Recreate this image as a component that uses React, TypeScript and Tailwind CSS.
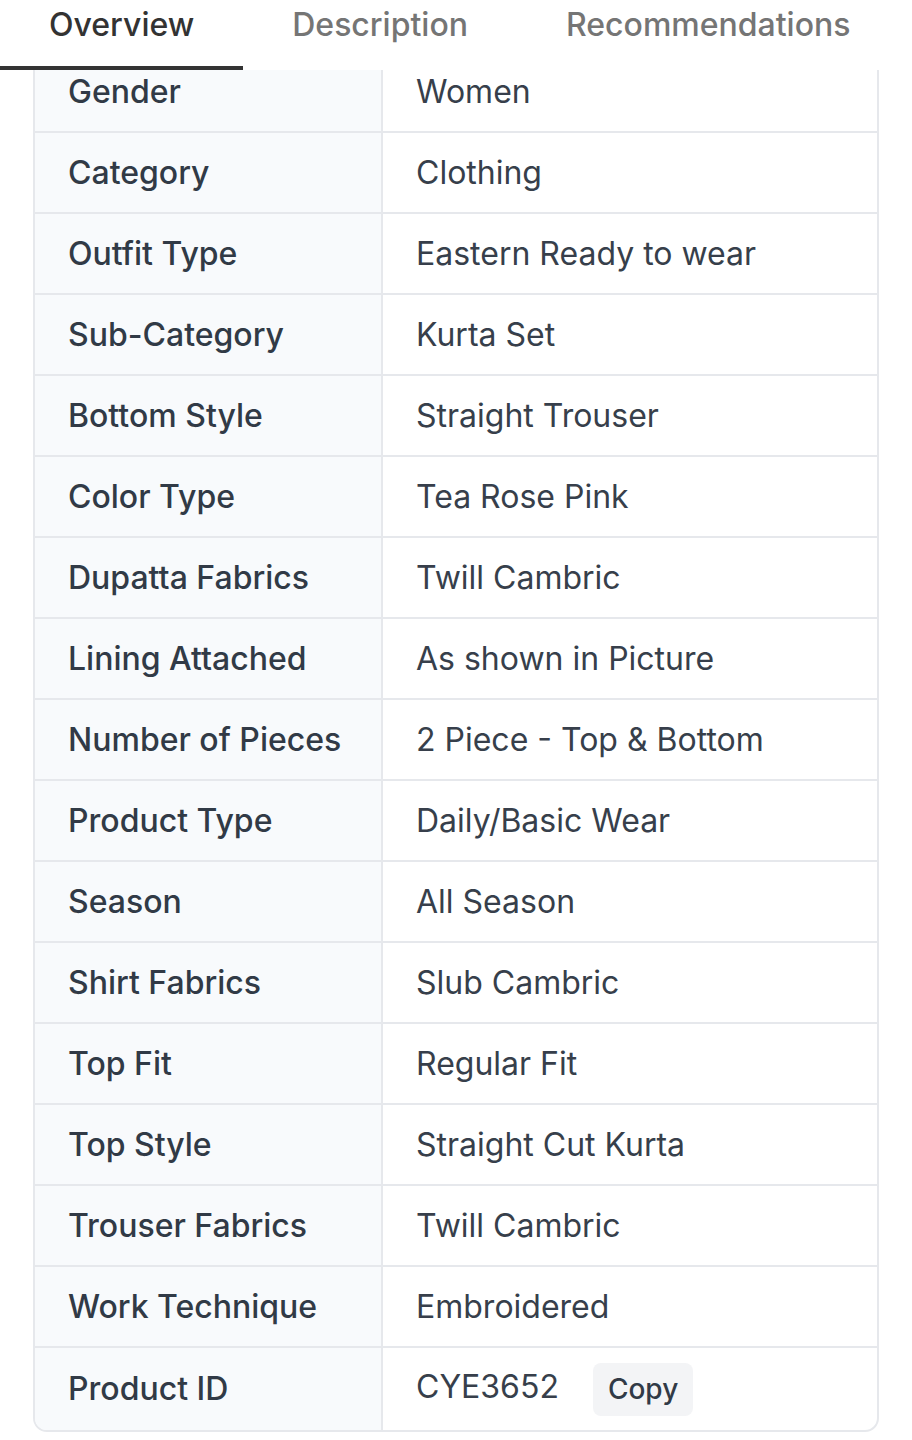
import { useState } from 'react';

const ROWS: [string, string][] = [
  ['Gender', 'Women'],
  ['Category', 'Clothing'],
  ['Outfit Type', 'Eastern Ready to wear'],
  ['Sub-Category', 'Kurta Set'],
  ['Bottom Style', 'Straight Trouser'],
  ['Color Type', 'Tea Rose Pink'],
  ['Dupatta Fabrics', 'Twill Cambric'],
  ['Lining Attached', 'As shown in Picture'],
  ['Number of Pieces', '2 Piece - Top & Bottom'],
  ['Product Type', 'Daily/Basic Wear'],
  ['Season', 'All Season'],
  ['Shirt Fabrics', 'Slub Cambric'],
  ['Top Fit', 'Regular Fit'],
  ['Top Style', 'Straight Cut Kurta'],
  ['Trouser Fabrics', 'Twill Cambric'],
  ['Work Technique', 'Embroidered'],
];

const TABS = ['Overview', 'Description', 'Recommendations'];

export default function App() {
  const [tab, setTab] = useState(0);

  return (
    <div className="w-[912px] bg-white" style={{ fontFamily: 'Inter, "Noto Sans", sans-serif' }}>
      {/* tab bar */}
      <div className="flex h-[70px]">
        {TABS.map((t, i) => (
          <button
            key={t}
            onClick={() => setTab(i)}
            className={`px-[49px] text-[32px] font-medium leading-none pb-[16px] border-b-4 ${
              tab === i ? 'text-[#333333] border-[#333333]' : 'text-[#757575] border-transparent'
            }`}
          >
            {t}
          </button>
        ))}
      </div>

      {/* table, scrolled a little under the tabs */}
      <div className="h-[1370px] overflow-hidden">
        <div className="mx-[33px] -mt-[20px] border-2 border-[#e6e8ec] rounded-b-[14px] overflow-hidden">
          {ROWS.map(([label, value]) => (
            <div key={label} className="grid grid-cols-[348px_1fr] h-[81px] border-b-2 border-[#e6e8ec]">
              <div className="flex items-center bg-[#f8fafc] border-r-2 border-[#e6e8ec] pl-[33px] text-[32px] font-medium text-[#313a46]">
                {label}
              </div>
              <div className="flex items-center pl-[33px] text-[32px] text-[#373f4b]">{value}</div>
            </div>
          ))}
          <div className="grid grid-cols-[348px_1fr] h-[82px]">
            <div className="flex items-center bg-[#f8fafc] border-r-2 border-[#e6e8ec] pl-[33px] text-[32px] font-medium text-[#313a46]">
              Product ID
            </div>
            <div className="flex items-center pl-[33px] text-[32px] text-[#373f4b]">
              <span className="-mt-[4px]">CYE3652</span>
              <button className="ml-[34px] h-[53px] px-[15px] rounded-[8px] bg-[#f3f4f6] text-[28px] font-medium text-[#313a46]">
                Copy
              </button>
            </div>
          </div>
        </div>
      </div>
    </div>
  );
}
